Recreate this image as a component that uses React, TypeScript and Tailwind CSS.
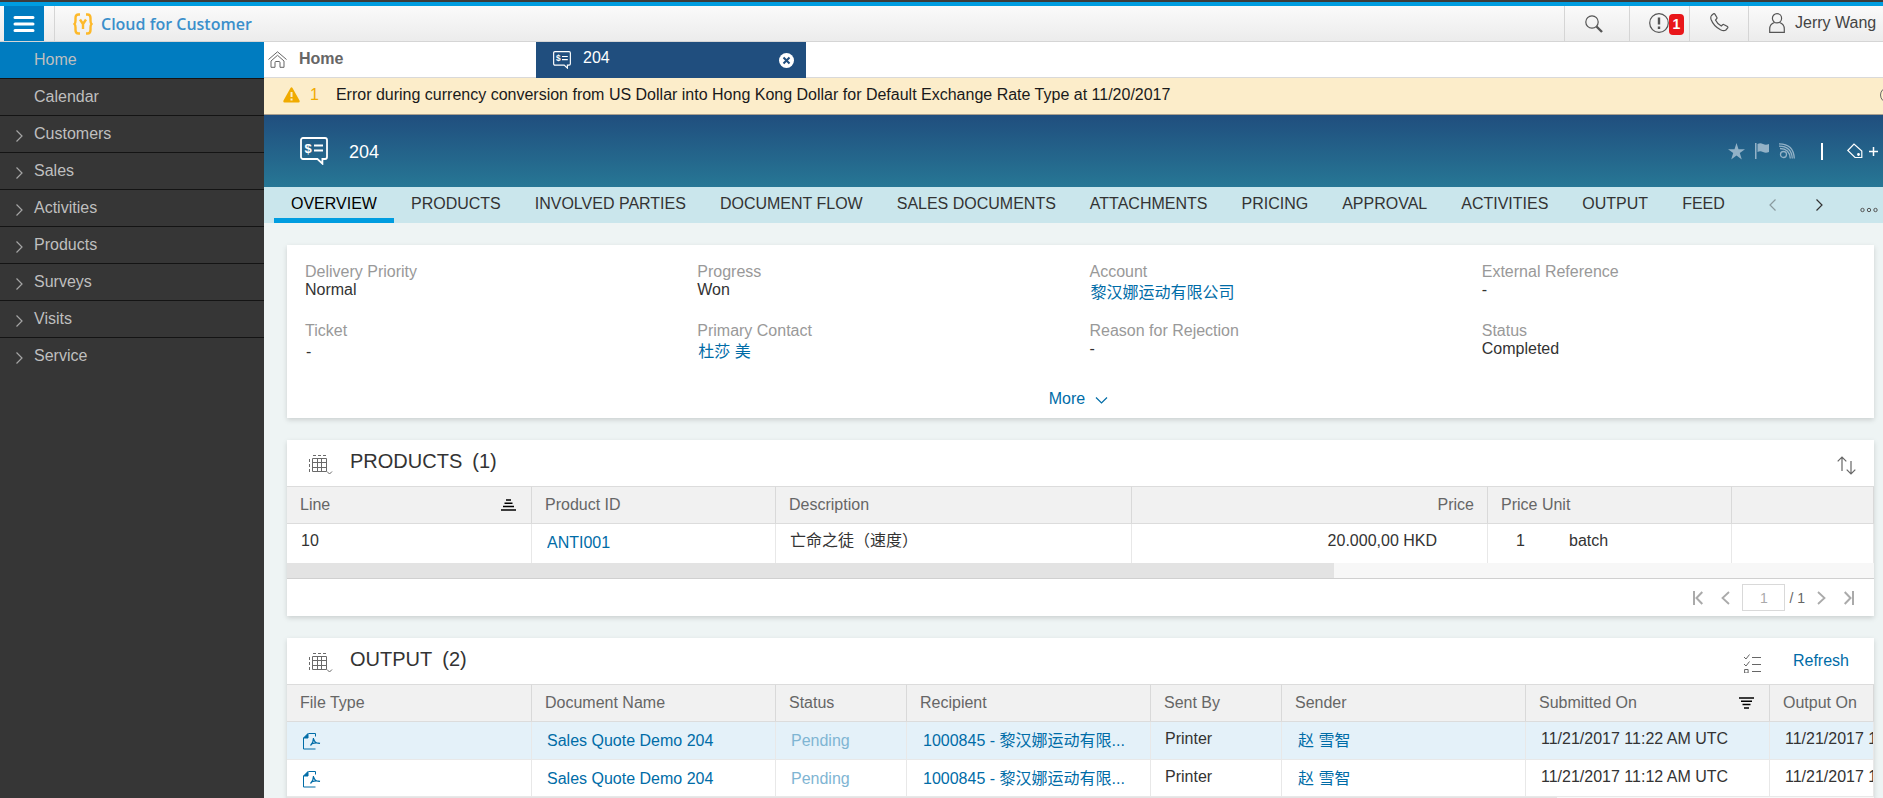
import { useState } from 'react';
import type { ReactNode } from 'react';

const MENU = [
  { label: 'Home', expandable: false },
  { label: 'Calendar', expandable: false },
  { label: 'Customers', expandable: true },
  { label: 'Sales', expandable: true },
  { label: 'Activities', expandable: true },
  { label: 'Products', expandable: true },
  { label: 'Surveys', expandable: true },
  { label: 'Visits', expandable: true },
  { label: 'Service', expandable: true },
];

const TABS = [
  'OVERVIEW',
  'PRODUCTS',
  'INVOLVED PARTIES',
  'DOCUMENT FLOW',
  'SALES DOCUMENTS',
  'ATTACHMENTS',
  'PRICING',
  'APPROVAL',
  'ACTIVITIES',
  'OUTPUT',
  'FEED',
];

interface Field {
  label: string;
  value: string;
  link?: boolean;
  indent?: boolean;
}

const FIELDS: Field[] = [
  { label: 'Delivery Priority', value: 'Normal' },
  { label: 'Progress', value: 'Won' },
  { label: 'Account', value: '黎汉娜运动有限公司', link: true },
  { label: 'External Reference', value: '-' },
  { label: 'Ticket', value: '-', indent: true },
  { label: 'Primary Contact', value: '杜莎 美', link: true },
  { label: 'Reason for Rejection', value: '-' },
  { label: 'Status', value: 'Completed' },
];

const OUTPUTS = [
  {
    name: 'Sales Quote Demo 204',
    status: 'Pending',
    recipient: '1000845 - 黎汉娜运动有限...',
    sentBy: 'Printer',
    sender: '赵 雪智',
    submitted: '11/21/2017 11:22 AM UTC',
    output: '11/21/2017 11:22 AM UTC',
  },
  {
    name: 'Sales Quote Demo 204',
    status: 'Pending',
    recipient: '1000845 - 黎汉娜运动有限...',
    sentBy: 'Printer',
    sender: '赵 雪智',
    submitted: '11/21/2017 11:12 AM UTC',
    output: '11/21/2017 11:12 AM UTC',
  },
];

function Chevron({ direction, className }: { direction: 'left' | 'right' | 'down'; className?: string }) {
  const d = {
    left: 'M8.5 1.5 3 7l5.5 5.5',
    right: 'M3.5 1.5 9 7l-5.5 5.5',
    down: 'M1 4.5 6.5 10 12 4.5',
  }[direction];
  return (
    <svg width="13" height="14" viewBox="0 0 13 14" fill="none" stroke="currentColor" strokeWidth="1.2" className={className}>
      <path d={d} />
    </svg>
  );
}

function QuoteIcon({ size }: { size: number }) {
  return (
    <svg width={size} height={size} viewBox="0 0 28 28" fill="none" stroke="white" strokeWidth="1.8">
      <path d="M3 1h22a2 2 0 0 1 2 2v17a2 2 0 0 1-2 2h-2.6v4.6L17.4 22H3a2 2 0 0 1-2-2V3a2 2 0 0 1 2-2Z" />
      <path d="M14 8.5h9M14 13.5h9" />
      <text x="4.5" y="15.5" fill="white" stroke="none" fontSize="13" fontWeight="bold" fontFamily="Liberation Sans, sans-serif">
        $
      </text>
    </svg>
  );
}

function TableIcon() {
  return (
    <svg width="24" height="20" viewBox="0 0 24 20" fill="none" stroke="#6a6a6a">
      <path d="M3.5 3.5h14v13h-14zM8.5 3.5v13M12.5 3.5v13M3.5 7.5h14M3.5 12.5h14" />
      <path d="M4 .5h3M9 .5h3M14 .5h3M.5 4v3M.5 9v3M.5 14v3" />
      <path d="m18 16.5 2.5 2.5 2.5-2.5" />
    </svg>
  );
}

function PdfIcon() {
  return (
    <svg width="18" height="17" viewBox="0 0 18 17" fill="none" stroke="#006ca7">
      <path d="M12.5 3.5v-3h-7M.5 5v11h12" />
      <path d="M.5 5 5 .5V5z" fill="#006ca7" />
      <path d="M10.500 5c.3 3 2.500 5.500 6.500 5.500M10.500 5c0 3-1 5.500-3 7.500M9 10.800q3.500-1.500 8-.5" strokeWidth="1.200" />
    </svg>
  );
}

function SortIcon({ descending }: { descending?: boolean }) {
  return (
    <svg width="15" height="12" viewBox="0 0 15 12" fill="none" stroke="black" strokeWidth="1.500">
      {descending ? (
        <path d="M0 1h15M2 4.300h11M3.500 7.600h8M5 10.900h5" />
      ) : (
        <path d="M5 1h5M3.500 4.300h8M2 7.600h11M0 10.900h15" />
      )}
    </svg>
  );
}

function ShellBar() {
  return (
    <header className="flex h-[42px] flex-none border-t-2 border-[#3c3c3c]">
      <div className="flex min-w-0 flex-1 border-t-4 border-b border-t-[#009de0] border-b-[#d5d5d5] bg-linear-to-b from-[#fafafa] to-[#ececec]">
        <button aria-label="Menu" className="ml-1 flex w-10 items-center justify-center bg-[#007cc0]">
          <svg width="22" height="18" viewBox="0 0 22 18" stroke="white" strokeWidth="3" strokeLinecap="round">
            <path d="M2 2.500h18M2 9h18M2 15.500h18" />
          </svg>
        </button>
        <div className="ml-2.5 flex items-center gap-2 border-l border-[#d5d5d5] pl-[18px]">
          <svg width="20" height="22" viewBox="0 0 20 22" fill="none" stroke="#fdb92a" strokeWidth="2.400">
            <path d="M7 1.500H5.500Q2.500 1.500 2.500 5v2.500Q2.500 10 1.500 11q1 1 1 3.500V17q0 3.500 3 3.500H7" />
            <path d="M13 1.500h1.500q3 0 3 3.500v2.500q0 2.500 1 3.500-1 1-1 3.500V17q0 3.500-3 3.500H13" />
            <path d="m7 6.500 3 4.500 3-4.500M10 10.500V16" />
          </svg>
          <span className="font-['Open_Sans',sans-serif] text-base font-semibold text-[#3a8fcb]">Cloud for Customer</span>
        </div>
        <div className="ml-auto flex text-[#555]">
          <button aria-label="Search" className="flex w-[65px] items-center border-l border-[#d5d5d5] pl-5">
            <svg width="18" height="18" viewBox="0 0 18 18" fill="none" stroke="currentColor">
              <circle cx="7" cy="7" r="6.200" strokeWidth="1.200" />
              <path d="m11.500 11.500 5.500 5.500" strokeWidth="2.400" />
            </svg>
          </button>
          <button aria-label="Notifications" className="flex w-[60px] items-center border-l border-[#d5d5d5] pb-0.5 pl-[19px]">
            <svg width="20" height="20" viewBox="0 0 20 20" fill="none" stroke="currentColor">
              <circle cx="10" cy="10" r="9.300" strokeWidth="1.200" />
              <path d="M10 4.500v7M10 13.500V16" strokeWidth="2.400" />
            </svg>
            <span className="mt-1 h-[21px] w-[15px] rounded-sm bg-[#e9161a] text-center text-sm leading-[21px] font-bold text-white">1</span>
          </button>
          <button aria-label="Phone" className="flex w-[59px] items-center border-l border-[#d5d5d5] pb-0.5 pl-5">
            <svg width="19" height="19" viewBox="0 0 19 19" fill="none" stroke="currentColor" strokeWidth="1.200">
              <path d="M1.500 2.500 3.500.8q.8-.5 1.400.3l2 3.400q.3.800-.3 1.300L5.500 7q1.500 3.500 5.800 6l1.300-1.200q.8-.6 1.600-.1l3.200 1.800q.8.700.3 1.400l-1.800 2.100q-2 1.500-5.400-.2Q3.500 13 1.100 6.500.3 4 1.500 2.500Z" />
            </svg>
          </button>
          <button className="flex w-[135px] items-center gap-2.5 border-l border-[#d5d5d5] pb-0.5 pl-5">
            <svg width="16" height="20" viewBox="0 0 16 20" fill="none" stroke="currentColor" strokeWidth="1.200">
              <circle cx="8" cy="5.300" r="4.600" />
              <path d="M5.500 9.500Q.7 11 .7 16v3.300h14.600V16q0-5-4.800-6.500" />
            </svg>
            <span className="whitespace-nowrap text-[#444]">Jerry Wang</span>
          </button>
        </div>
      </div>
    </header>
  );
}

function SideMenu() {
  return (
    <nav className="w-[264px] flex-none bg-[#363636]">
      <ul>
        {MENU.map((item, i) => (
          <li key={item.label} className={i < MENU.length - 1 ? 'border-b border-[#141414]' : ''}>
            <a
              href="#"
              className={`flex h-9 items-center text-[#bfbfbf] ${i === 0 ? 'bg-[#007cc0]' : ''}`}
            >
              <span className="flex w-[34px] justify-center pt-1 pl-1 text-[#a5a5a5]">
                {item.expandable && <Chevron direction="right" />}
              </span>
              {item.label}
            </a>
          </li>
        ))}
      </ul>
    </nav>
  );
}

function WorkTabs() {
  return (
    <div className="flex h-9 flex-none bg-white">
      <a href="#" className="flex w-[272px] items-center border-b border-[#d9d9d9] pb-0.5 pl-1 font-bold text-[#666]">
        <svg width="19" height="17" viewBox="0 0 19 17" fill="none" stroke="#666" className="mt-0.5">
          <path d="M.5 8.500 9.500.8l9 7.700" />
          <path d="M3 10 9.500 4.300 16 10v6.300h-4v-4.800q0-1-1-1H8q-1 0-1 1v4.800H3z" />
        </svg>
        <span className="pl-3">Home</span>
      </a>
      <div className="flex w-[270px] items-center bg-[#204e7e] pr-3 pl-[17px] text-white">
        <QuoteIcon size={18} />
        <span className="flex-1 pb-1 pl-3">204</span>
        <button aria-label="Close tab">
          <svg width="15" height="15" viewBox="0 0 15 15">
            <circle cx="7.500" cy="7.500" r="7.500" fill="white" />
            <path d="m4.500 4.500 6 6m0-6-6 6" stroke="#204e7e" strokeWidth="2" />
          </svg>
        </button>
      </div>
      <div className="flex-1 border-b border-[#d9d9d9]" />
    </div>
  );
}

function MessageBar() {
  return (
    <div className="flex h-[37px] flex-none items-center overflow-hidden border-b border-[#a99f8e] bg-[#fcedca] pb-[3px] pl-[19px]">
      <svg width="17" height="16" viewBox="0 0 17 16">
        <path d="M7.500 1q1-1.500 2 0l7 12.500Q17.200 15.500 15.500 15.500h-14Q-.2 15.500.5 13.500Z" fill="#f0ab00" />
        <path d="M8.500 5v5M8.500 11.500v2" stroke="#fcedca" strokeWidth="2" />
      </svg>
      <span className="pl-2.5 text-[#f0ab00]">1</span>
      <span className="flex-1 pl-[17px] whitespace-nowrap text-[#1a1a1a]">
        Error during currency conversion from US Dollar into Hong Kong Dollar for Default Exchange Rate Type at 11/20/2017
      </span>
      <svg width="16" height="16" viewBox="0 0 16 16" fill="none" stroke="#666" className="-mr-[13px] flex-none">
        <circle cx="8" cy="8" r="7.500" />
        <path d="M8 7v5M8 4v1.500" />
      </svg>
    </div>
  );
}

function ObjectHeader() {
  return (
    <div className="flex h-[72px] flex-none items-center bg-linear-to-b from-[#204e7e] to-[#277795] pr-[5px] pl-9 text-white">
      <QuoteIcon size={28} />
      <h1 className="flex-1 pt-0.5 pl-[21px] text-lg">204</h1>
      <button aria-label="Favorite" className="text-[#93b2c7]">
        <svg width="17" height="17" viewBox="0 0 17 17" fill="currentColor">
          <path d="m8.500 0 2 6.200H17l-5.200 3.900 2 6.400-5.300-3.900-5.300 3.900 2-6.400L0 6.200h6.500z" />
        </svg>
      </button>
      <button aria-label="Flag" className="ml-2.5 text-[#93b2c7]">
        <svg width="14" height="16" viewBox="0 0 14 16" fill="currentColor">
          <path d="M0 0h1.500v16H0zM2.500 1q2.800-1.500 5.500 0t6 0v8q-3.200 1.300-6 0t-5.500 0z" />
        </svg>
      </button>
      <button aria-label="Follow" className="ml-2.5 text-[#93b2c7]">
        <svg width="16" height="16" viewBox="0 0 16 16" fill="none" stroke="currentColor" strokeWidth="1.300">
          <circle cx="4.500" cy="11.500" r="3" />
          <path d="M1 5.500q9.500 0 10.300 10M0 3.200q12.500 0 13.300 12.300M0 .8q14.700 0 15.300 14.700" />
        </svg>
      </button>
      <span className="ml-[26px] h-[17px] w-0.5 bg-white" />
      <button aria-label="Add tag" className="ml-6 flex items-center gap-1.5">
        <svg width="16" height="16" viewBox="0 0 16 16" fill="none" stroke="white" strokeWidth="1.200">
          <path d="M.8 7.500 7 1l7.800 7v6.500H8z" />
          <circle cx="11.500" cy="11.500" r=".8" fill="white" />
        </svg>
        <svg width="9" height="9" viewBox="0 0 9 9" stroke="white" strokeWidth="1.500">
          <path d="M4.500 0v9M0 4.500h9" />
        </svg>
      </button>
    </div>
  );
}

function FacetTabs() {
  const [active, setActive] = useState('OVERVIEW');
  return (
    <nav className="flex h-9 flex-none bg-[#cae6ec] pl-2.5 text-[#333]">
      {TABS.map((tab) => (
        <button
          key={tab}
          onClick={() => setActive(tab)}
          className={`border-b-[5px] px-[17px] pt-[3px] whitespace-nowrap ${
            tab === active ? 'border-[#009de0] text-black' : 'border-transparent'
          }`}
        >
          {tab}
        </button>
      ))}
      <div className="ml-auto flex items-center pr-[5px]">
        <button aria-label="Previous">
          <Chevron direction="left" className="text-[#8a9a9e]" />
        </button>
        <button aria-label="Next" className="ml-[33px]">
          <Chevron direction="right" />
        </button>
        <button aria-label="More tabs" className="ml-[34px] pt-2.5">
          <svg width="18" height="6" viewBox="0 0 18 6" fill="none" stroke="#555">
            <circle cx="2.500" cy="3" r="1.700" />
            <circle cx="9" cy="3" r="1.700" />
            <circle cx="15.500" cy="3" r="1.700" />
          </svg>
        </button>
      </div>
    </nav>
  );
}

function Card({ children }: { children: ReactNode }) {
  return <section className="flex-none overflow-hidden bg-white shadow-[0_2px_5px_rgba(0,0,0,0.15)]">{children}</section>;
}

function Details() {
  return (
    <Card>
      <dl className="grid grid-cols-4 gap-y-[23px] pt-[18px] pl-[18px]">
        {FIELDS.map((field) => (
          <div key={field.label} className="h-9 leading-[18px]">
            <dt className="text-[#999]">{field.label}</dt>
            <dd className={field.link || field.indent ? 'pt-[3px] pl-px text-[#333]' : 'text-[#333]'}>
              {field.link ? (
                <a href="#" className="text-[#006ca7]">
                  {field.value}
                </a>
              ) : (
                field.value
              )}
            </dd>
          </div>
        ))}
      </dl>
      <div className="flex justify-center pt-[31px] pr-1 pb-2.5">
        <button className="flex h-[19px] items-center gap-2.5 text-[#006ca7]">
          More
          <Chevron direction="down" className="mt-0.5" />
        </button>
      </div>
    </Card>
  );
}

function CardTitle({ title, count, children }: { title: string; count: number; children: ReactNode }) {
  return (
    <div className="flex h-[46px] items-center pl-[22px]">
      <button aria-label={`${title} views`} className="pt-1">
        <TableIcon />
      </button>
      <h2 className="flex flex-1 gap-2.5 pb-1 pl-[17px] text-xl text-[#333]">
        <span>{title}</span>
        <span>({count})</span>
      </h2>
      {children}
    </div>
  );
}

function Th({ children, right }: { children?: ReactNode; right?: boolean }) {
  return (
    <th
      className={`h-[38px] border-y border-r border-y-[#dcdcdc] border-r-[#d9d9d9] bg-[#f1f1f1] px-[13px] font-normal whitespace-nowrap text-[#666] ${
        right ? 'text-right' : 'text-left'
      }`}
    >
      {children}
    </th>
  );
}

function Td({ children, className = 'pl-3.5' }: { children?: ReactNode; className?: string }) {
  return (
    <td className={`overflow-hidden border-r border-[#e8e8e8] pt-2 align-top leading-[18px] whitespace-nowrap text-[#333] ${className}`}>
      {children}
    </td>
  );
}

function CellLink({ children, muted }: { children: ReactNode; muted?: boolean }) {
  return (
    <a href="#" className={`block truncate pt-0.5 ${muted ? 'text-[#7fb5d3]' : 'text-[#006ca7]'}`}>
      {children}
    </a>
  );
}

function Products() {
  return (
    <Card>
      <CardTitle title="PRODUCTS" count={1}>
        <button aria-label="Sort" className="mr-[18px] pt-1">
          <svg width="19" height="19" viewBox="0 0 19 19" fill="none" stroke="#666" strokeWidth="1.200">
            <path d="M5 15V1M.7 5.300 5 1l4.300 4.300M14 5v13M9.700 13.700 14 18l4.300-4.300" />
          </svg>
        </button>
      </CardTitle>
      <table className="w-full table-fixed border-separate border-spacing-0">
        <colgroup>
          <col className="w-[245px]" />
          <col className="w-[244px]" />
          <col className="w-[356px]" />
          <col className="w-[356px]" />
          <col className="w-[244px]" />
          <col />
        </colgroup>
        <thead>
          <tr>
            <Th>
              <span className="flex items-center justify-between pr-0.5">
                Line <SortIcon />
              </span>
            </Th>
            <Th>Product ID</Th>
            <Th>Description</Th>
            <Th right>Price</Th>
            <Th>Price Unit</Th>
            <Th />
          </tr>
        </thead>
        <tbody>
          <tr className="h-[39px]">
            <Td>10</Td>
            <Td className="pl-[15px]">
              <CellLink>ANTI001</CellLink>
            </Td>
            <Td>亡命之徒（速度）</Td>
            <Td className="pr-[50px] text-right">20.000,00 HKD</Td>
            <Td className="pl-7">
              <span className="inline-block w-[53px]">1</span>batch
            </Td>
            <Td />
          </tr>
        </tbody>
      </table>
      <div className="h-4 border-b border-[#d0d0d0] bg-[#f7f7f7]">
        <div className="h-full w-[66%] bg-[#e3e3e3]" />
      </div>
      <div className="flex h-[37px] items-center justify-end pr-5 text-[#aaa]">
        <button aria-label="First page">
          <svg width="10" height="14" viewBox="0 0 10 14" fill="none" stroke="currentColor" strokeWidth="2">
            <path d="M1 0v14M9.300 1 3.500 7l5.800 6" />
          </svg>
        </button>
        <button aria-label="Previous page" className="ml-[18px]">
          <svg width="9" height="14" viewBox="0 0 9 14" fill="none" stroke="currentColor" strokeWidth="1.800">
            <path d="M8 1 1.500 7 8 13" />
          </svg>
        </button>
        <input
          aria-label="Page"
          defaultValue="1"
          className="ml-3 h-[27px] w-[43px] border border-[#d9d9d9] text-center text-sm text-[#aaa]"
        />
        <span className="pl-1 text-sm text-[#666]">/ 1</span>
        <button aria-label="Next page" className="ml-3">
          <svg width="9" height="14" viewBox="0 0 9 14" fill="none" stroke="currentColor" strokeWidth="1.800">
            <path d="m1 1 6.500 6L1 13" />
          </svg>
        </button>
        <button aria-label="Last page" className="ml-[18px]">
          <svg width="10" height="14" viewBox="0 0 10 14" fill="none" stroke="currentColor" strokeWidth="2">
            <path d="M9 0v14M.7 1l5.800 6-5.800 6" />
          </svg>
        </button>
      </div>
    </Card>
  );
}

function Output() {
  return (
    <Card>
      <CardTitle title="OUTPUT" count={2}>
        <button aria-label="Select items" className="pt-1">
          <svg width="17" height="19" viewBox="0 0 17 19" fill="none" stroke="#666">
            <path d="m0 3 2 2 3.500-4.500M0 10l2 2 3.500-4.500M8 3.500h9M8 10.500h9M8 17.500h9" />
            <path d="M.6 15.500h3.500V19H.6z" />
          </svg>
        </button>
        <button className="pr-[25px] pl-8 text-[#006ca7]">Refresh</button>
      </CardTitle>
      <table className="w-full table-fixed border-separate border-spacing-0">
        <colgroup>
          <col className="w-[245px]" />
          <col className="w-[244px]" />
          <col className="w-[131px]" />
          <col className="w-[244px]" />
          <col className="w-[131px]" />
          <col className="w-[244px]" />
          <col className="w-[244px]" />
          <col />
        </colgroup>
        <thead>
          <tr>
            <Th>File Type</Th>
            <Th>Document Name</Th>
            <Th>Status</Th>
            <Th>Recipient</Th>
            <Th>Sent By</Th>
            <Th>Sender</Th>
            <Th>
              <span className="flex items-center justify-between pr-0.5">
                Submitted On <SortIcon descending />
              </span>
            </Th>
            <Th>Output On</Th>
          </tr>
        </thead>
        <tbody>
          {OUTPUTS.map((row, i) => (
            <tr key={row.submitted} className={i === 0 ? 'h-[38px] bg-[#e4f1f9]' : 'h-[37px]'}>
              <Td className="border-b pl-4">
                <a href="#" aria-label="Open PDF" className="block pt-[3px]">
                  <PdfIcon />
                </a>
              </Td>
              <Td className="border-b pl-[15px]">
                <CellLink>{row.name}</CellLink>
              </Td>
              <Td className="border-b pl-[15px]">
                <CellLink muted>{row.status}</CellLink>
              </Td>
              <Td className="border-b pl-4">
                <CellLink>{row.recipient}</CellLink>
              </Td>
              <Td className="border-b pl-3.5">{row.sentBy}</Td>
              <Td className="border-b pl-4">
                <CellLink>{row.sender}</CellLink>
              </Td>
              <Td className="border-b pl-[15px]">{row.submitted}</Td>
              <Td className="border-b pl-[15px]">{row.output}</Td>
            </tr>
          ))}
        </tbody>
      </table>
      <div className="h-4 border-b border-[#d0d0d0] bg-[#f7f7f7]">
        <div className="h-full w-[80%] bg-[#e3e3e3]" />
      </div>
    </Card>
  );
}

export default function App() {
  return (
    <div className="flex h-screen flex-col overflow-hidden bg-[#eef4f4] font-['Liberation_Sans','Noto_Sans_CJK_SC',sans-serif] text-base">
      <ShellBar />
      <div className="flex min-h-0 flex-1">
        <SideMenu />
        <div className="flex min-w-0 flex-1 flex-col">
          <WorkTabs />
          <MessageBar />
          <ObjectHeader />
          <FacetTabs />
          <main className="flex min-h-0 flex-1 flex-col gap-[22px] overflow-hidden pt-[22px] pr-[9px] pl-[23px]">
            <Details />
            <Products />
            <Output />
          </main>
        </div>
      </div>
    </div>
  );
}
